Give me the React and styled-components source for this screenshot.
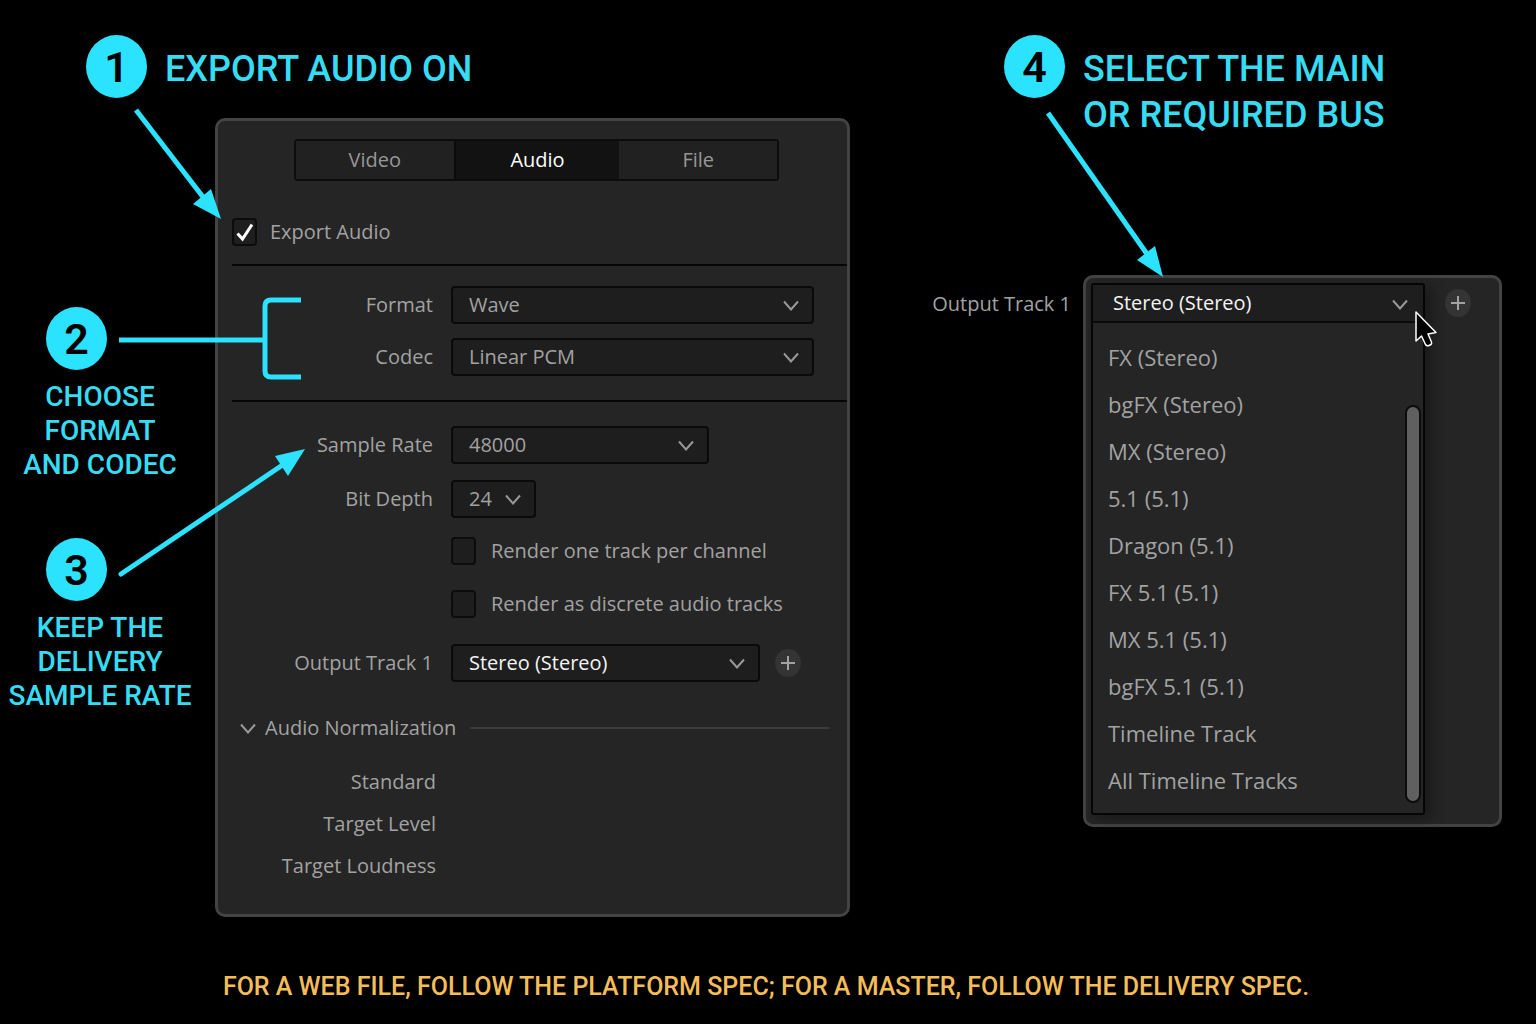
import React from "react";
import styled, { createGlobalStyle } from "styled-components";

const formats = ["Wave", "MP3", "QuickTime"];
const codecs = ["Linear PCM", "IEEE Float"];
const sampleRates = ["48000", "44100", "96000"];
const bitDepths = ["24", "16", "32"];
const outputTracks = ["Stereo (Stereo)"];
const busOptions = [
  "FX (Stereo)",
  "bgFX (Stereo)",
  "MX (Stereo)",
  "5.1 (5.1)",
  "Dragon (5.1)",
  "FX 5.1 (5.1)",
  "MX 5.1 (5.1)",
  "bgFX 5.1 (5.1)",
  "Timeline Track",
  "All Timeline Tracks",
];

const cyan = "#2be2ff";
const grey = "#a2a2a2";

const GlobalStyle = createGlobalStyle`
  * {
    box-sizing: border-box;
  }
  body {
    margin: 0;
    background: #000;
  }
  button, select, input {
    font: inherit;
    color: inherit;
    margin: 0;
    padding: 0;
  }
`;

const Page = styled.main`
  min-height: 100vh;
  padding-bottom: 20px;
  background: #000;
  color: ${grey};
  font-family: "Open Sans", "Noto Sans", sans-serif;
  font-size: 20px;
  line-height: 28px;
`;

const Columns = styled.div`
  display: flex;
  align-items: flex-start;
`;

const Column = styled.section`
  position: relative;
  flex: ${(props) => props.$share} 1 0;
  min-width: 0;
`;

const Header = styled.header`
  display: flex;
  gap: 18px;
  padding-top: 35px;
  padding-left: ${(props) => props.$indent}px;
  margin-bottom: ${(props) => props.$space}px;
`;

const Badge = styled.span`
  display: flex;
  align-items: center;
  justify-content: center;
  flex: none;
  width: 61px;
  height: 63px;
  border-radius: 50%;
  background: ${cyan};
  color: #000;
  font-family: Roboto, sans-serif;
  font-size: 43px;
  font-weight: 600;
  line-height: 42px;
`;

const Title = styled.h2`
  margin: 0;
  padding-top: 11px;
  color: #35dcf3;
  font-family: Roboto, sans-serif;
  font-size: 36px;
  font-weight: 500;
  line-height: 46px;
`;

const Row = styled.div`
  display: flex;
  align-items: flex-start;
`;

const Notes = styled.aside`
  display: flex;
  flex-direction: column;
  gap: 56px;
  flex: none;
  width: 215px;
  padding-top: 189px;
`;

const Note = styled.div`
  display: flex;
  flex-direction: column;
  gap: 10px;
  padding-left: 46px;
`;

const NoteText = styled.p`
  align-self: flex-start;
  width: 200px;
  margin: 0 0 0 -46px;
  color: #35dcf3;
  font-family: Roboto, sans-serif;
  font-size: 28px;
  font-weight: 500;
  line-height: 34px;
  text-align: center;
`;

const Panel = styled.div`
  position: relative;
  flex: 1;
  min-width: 0;
  border: 3px solid #434343;
  border-radius: 10px;
  background: #252525;
`;

const Tabs = styled.div`
  display: flex;
  margin: 18px 68px 0 76px;
  border: 2px solid #0c0c0c;
  border-radius: 4px;
`;

const Tab = styled.button`
  flex: ${(props) => (props.$active ? 26 : 25)} 1 0;
  height: 38px;
  border: 0;
  border-left: ${(props) => (props.$active ? "2px solid #0c0c0c" : "0")};
  background: ${(props) => (props.$active ? "#121212" : "#212121")};
  color: ${(props) => (props.$active ? "#fff" : "#979797")};
`;

const Section = styled.div`
  display: flex;
  flex-direction: column;
  gap: ${(props) => props.$gap}px;
  margin-left: 14px;
  padding: ${(props) => props.$pad};
  border-bottom: ${(props) => (props.$ruled ? "2px solid #060606" : "0")};
`;

const Field = styled.div`
  display: flex;
  align-items: center;
`;

const FieldLabel = styled.label`
  flex: none;
  width: 201px;
  margin-right: 18px;
  text-align: right;
`;

const SelectBox = styled.div`
  position: relative;
  flex: 0 1 ${(props) => props.$width}px;
  min-width: 0;
`;

const Select = styled.select`
  display: block;
  appearance: none;
  width: 100%;
  height: 38px;
  padding-left: 16px;
  border: 2px solid #0a0a0a;
  border-radius: 4px;
  background: #1e1e1e;
  color: ${(props) => (props.$bright ? "#f4f4f4" : grey)};
`;

const SelectArrow = styled.span`
  position: absolute;
  top: 14px;
  right: 15px;
  display: flex;
  pointer-events: none;
`;

const CheckRow = styled.label`
  display: flex;
  align-items: center;
  gap: ${(props) => props.$gap}px;
`;

const CheckBox = styled.span`
  display: grid;
  width: 25px;
  height: 28px;

  svg,
  input {
    grid-area: 1 / 1;
  }
  svg {
    place-self: center;
    pointer-events: none;
  }
`;

const Check = styled.input`
  appearance: none;
  width: 25px;
  height: 28px;
  border: 2px solid #0c0c0c;
  border-radius: 4px;
  background: #1e1e1e;
`;

const CheckGroup = styled.div`
  display: flex;
  flex-direction: column;
  gap: 25px;
  padding: 3px 0 10px 219px;
`;

const AddButton = styled.button`
  display: flex;
  align-items: center;
  justify-content: center;
  flex: none;
  width: 26px;
  height: 28px;
  margin-left: 15px;
  border: 0;
  border-radius: 50%;
  background: #343434;
`;

const Normalization = styled.div`
  display: flex;
  align-items: center;
  gap: 14px;
  margin: 32px 18px 19px 22px;

  &::after {
    content: "";
    flex: 1;
    height: 2px;
    background: #3a3a3a;
  }
`;

const Disclosure = styled.button`
  display: flex;
  align-items: center;
  gap: 9px;
  border: 0;
  background: none;
`;

const Levels = styled.ul`
  width: 218px;
  margin: 0;
  padding: 0 0 27px;
  list-style: none;
  line-height: 42px;
  text-align: right;
`;

const BusRow = styled.div`
  display: flex;
  align-items: flex-start;
  gap: 12px;
  padding-right: 34px;
`;

const BusLabel = styled.label`
  flex: none;
  width: 221px;
  padding-top: 15px;
  text-align: right;
`;

const BusPanel = styled(Panel)`
  display: flex;
  padding: 5px 28px 9px 5px;
`;

const DropDown = styled.div`
  position: relative;
  flex: 1;
  min-width: 0;
  border: 2px solid #050505;
  border-radius: 3px;
  box-shadow: 6px 4px 14px rgba(0, 0, 0, 0.35);
`;

const BusSelect = styled(Select)`
  padding-left: 20px;
  border-width: 0 0 2px;
  border-radius: 0;
`;

const Menu = styled.ul`
  margin: 0;
  padding: 10px 0;
  list-style: none;
  font-size: 22px;
`;

const MenuItem = styled.button`
  display: block;
  width: 100%;
  height: 47px;
  padding-left: 15px;
  border: 0;
  background: none;
  text-align: left;
`;

const ScrollThumb = styled.div`
  position: absolute;
  top: 120px;
  right: 2px;
  bottom: 10px;
  width: 16px;
  border: 2px solid #0c0c0c;
  border-radius: 8px;
  background: #606060;
`;

const BusAdd = styled(AddButton)`
  margin: 6px 0 0 20px;
`;

const Overlay = styled.svg`
  position: absolute;
  top: 0;
  left: 0;
  z-index: 1;
  pointer-events: none;
`;

const Pointer = styled.svg`
  position: absolute;
  top: 32px;
  right: 61px;
  pointer-events: none;
`;

const Footer = styled.footer`
  margin-top: 53px;
  padding-right: 4px;
  color: #f5bd58;
  font-family: Roboto, sans-serif;
  font-size: 25px;
  font-weight: 500;
  line-height: 34px;
  text-align: center;
`;

const Chevron = () => (
  <svg width="16" height="11" viewBox="0 0 16 11" fill="none" aria-hidden="true">
    <path d="M1 1.500 8 9.500l7-8" stroke="#989898" strokeWidth="2" />
  </svg>
);

const Plus = () => (
  <svg width="14" height="14" viewBox="0 0 14 14" aria-hidden="true">
    <path d="M7 0v14M0 7h14" stroke="#a2a2a2" strokeWidth="2" />
  </svg>
);

const DropField = ({ id, label, options, width, bright, children }) => (
  <Field>
    <FieldLabel htmlFor={id}>{label}</FieldLabel>
    <SelectBox $width={width}>
      <Select id={id} $bright={bright}>
        {options.map((option) => (
          <option key={option}>{option}</option>
        ))}
      </Select>
      <SelectArrow>
        <Chevron />
      </SelectArrow>
    </SelectBox>
    {children}
  </Field>
);

const CheckField = ({ label, checked, gap }) => (
  <CheckRow $gap={gap}>
    <CheckBox>
      <Check type="checkbox" defaultChecked={checked} />
      {checked && (
        <svg width="17" height="19" viewBox="0 0 17 19" fill="none">
          <path
            d="M1.500 10.500 6.500 16 16 1.500"
            stroke="#fff"
            strokeWidth="3"
          />
        </svg>
      )}
    </CheckBox>
    {label}
  </CheckRow>
);

const ExportPanel = () => (
  <Panel>
    <Tabs>
      <Tab>Video</Tab>
      <Tab $active>Audio</Tab>
      <Tab>File</Tab>
    </Tabs>
    <Section $gap={0} $pad="37px 0 18px" $ruled>
      <CheckField label="Export Audio" gap={13} checked />
    </Section>
    <Section $gap={14} $pad="20px 0 24px" $ruled>
      <DropField id="format" label="Format" options={formats} width={363} />
      <DropField id="codec" label="Codec" options={codecs} width={363} />
    </Section>
    <Section $gap={16} $pad="24px 0 0">
      <DropField
        id="rate"
        label="Sample Rate"
        options={sampleRates}
        width={258}
      />
      <DropField id="depth" label="Bit Depth" options={bitDepths} width={85} />
      <CheckGroup>
        <CheckField label="Render one track per channel" gap={15} />
        <CheckField label="Render as discrete audio tracks" gap={15} />
      </CheckGroup>
      <DropField
        id="track"
        label="Output Track 1"
        options={outputTracks}
        width={309}
        bright
      >
        <AddButton aria-label="Add output track">
          <Plus />
        </AddButton>
      </DropField>
    </Section>
    <Normalization>
      <Disclosure>
        <Chevron />
        Audio Normalization
      </Disclosure>
    </Normalization>
    <Levels>
      <li>Standard</li>
      <li>Target Level</li>
      <li>Target Loudness</li>
    </Levels>
  </Panel>
);

const BusPicker = () => (
  <BusRow>
    <BusLabel htmlFor="bus">Output Track 1</BusLabel>
    <BusPanel>
      <DropDown>
        <BusSelect id="bus" $bright>
          <option>Stereo (Stereo)</option>
        </BusSelect>
        <SelectArrow>
          <Chevron />
        </SelectArrow>
        <Menu>
          {busOptions.map((option) => (
            <li key={option}>
              <MenuItem>{option}</MenuItem>
            </li>
          ))}
        </Menu>
        <ScrollThumb />
      </DropDown>
      <BusAdd aria-label="Add output track">
        <Plus />
      </BusAdd>
      <Pointer width="24" height="38" viewBox="-2 -2 24 38">
        <path
          d="M0 0V29L5.500 24 9.500 32.500Q11 34.500 13 33.500L15 32.500Q16 31 15.500 30L12 22 20 20.500Z"
          fill="#000"
          stroke="#fff"
          strokeWidth="1.500"
          strokeLinejoin="round"
        />
      </Pointer>
    </BusPanel>
  </BusRow>
);

const App = () => {
  return (
    <>
      <GlobalStyle />
      <Page>
        <Columns>
          <Column $share={850}>
            <Header $indent={86} $space={20}>
              <Badge>1</Badge>
              <Title>EXPORT AUDIO ON</Title>
            </Header>
            <Row>
              <Notes>
                <Note>
                  <Badge>2</Badge>
                  <NoteText>
                    CHOOSE
                    <br />
                    FORMAT
                    <br />
                    AND CODEC
                  </NoteText>
                </Note>
                <Note>
                  <Badge>3</Badge>
                  <NoteText>
                    KEEP THE
                    <br />
                    DELIVERY
                    <br />
                    SAMPLE RATE
                  </NoteText>
                </Note>
              </Notes>
              <ExportPanel />
            </Row>
            <Overlay width="320" height="600" fill={cyan} stroke={cyan}>
              <path d="M136 110 203 197" strokeWidth="5" />
              <path d="M221 219 193 204 211 189Z" stroke="none" />
              <path
                d="M119 340H265M301 300H271Q265 300 265 306V371Q265 377 271 377H301"
                fill="none"
                strokeWidth="5"
              />
              <path d="M121 574 284 464" strokeWidth="5" strokeLinecap="round" />
              <path d="M305 449 275 456 288 476Z" stroke="none" />
            </Overlay>
          </Column>
          <Column $share={686}>
            <Header $indent={154} $space={137}>
              <Badge>4</Badge>
              <Title>
                SELECT THE MAIN
                <br />
                OR REQUIRED BUS
              </Title>
            </Header>
            <BusPicker />
            <Overlay width="330" height="290" fill={cyan} stroke={cyan}>
              <path d="M198 113 297 254" strokeWidth="5" />
              <path d="M313 277 287 260 305 246Z" stroke="none" />
            </Overlay>
          </Column>
        </Columns>
        <Footer>
          FOR A WEB FILE, FOLLOW THE PLATFORM SPEC; FOR A MASTER, FOLLOW THE
          DELIVERY SPEC.
        </Footer>
      </Page>
    </>
  );
};

export default App;
